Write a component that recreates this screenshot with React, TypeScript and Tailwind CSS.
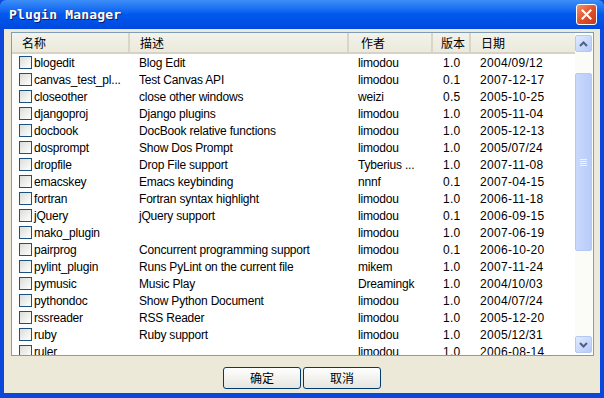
import React from 'react';

type Plugin = {
  name: string;
  desc: string;
  author: string;
  version: string;
  date: string;
};

const plugins: Plugin[] = [
  { name: 'blogedit', desc: 'Blog Edit', author: 'limodou', version: '1.0', date: '2004/09/12' },
  { name: 'canvas_test_pl...', desc: 'Test Canvas API', author: 'limodou', version: '0.1', date: '2007-12-17' },
  { name: 'closeother', desc: 'close other windows', author: 'weizi', version: '0.5', date: '2005-10-25' },
  { name: 'djangoproj', desc: 'Django plugins', author: 'limodou', version: '1.0', date: '2005-11-04' },
  { name: 'docbook', desc: 'DocBook relative functions', author: 'limodou', version: '1.0', date: '2005-12-13' },
  { name: 'dosprompt', desc: 'Show Dos Prompt', author: 'limodou', version: '1.0', date: '2005/07/24' },
  { name: 'dropfile', desc: 'Drop File support', author: 'Tyberius ...', version: '1.0', date: '2007-11-08' },
  { name: 'emacskey', desc: 'Emacs keybinding', author: 'nnnf', version: '0.1', date: '2007-04-15' },
  { name: 'fortran', desc: 'Fortran syntax highlight', author: 'limodou', version: '1.0', date: '2006-11-18' },
  { name: 'jQuery', desc: 'jQuery support', author: 'limodou', version: '0.1', date: '2006-09-15' },
  { name: 'mako_plugin', desc: '', author: 'limodou', version: '1.0', date: '2007-06-19' },
  { name: 'pairprog', desc: 'Concurrent programming support', author: 'limodou', version: '0.1', date: '2006-10-20' },
  { name: 'pylint_plugin', desc: 'Runs PyLint on the current file', author: 'mikem', version: '1.0', date: '2007-11-24' },
  { name: 'pymusic', desc: 'Music Play', author: 'Dreamingk', version: '1.0', date: '2004/10/03' },
  { name: 'pythondoc', desc: 'Show Python Document', author: 'limodou', version: '1.0', date: '2004/07/24' },
  { name: 'rssreader', desc: 'RSS Reader', author: 'limodou', version: '1.0', date: '2005-12-20' },
  { name: 'ruby', desc: 'Ruby support', author: 'limodou', version: '1.0', date: '2005/12/31' },
  { name: 'ruler', desc: '', author: 'limodou', version: '1.0', date: '2006-08-14' },
];

const uiFont = "font-['Liberation_Sans','Noto_Sans_CJK_SC',sans-serif]";

const HeaderCell: React.FC<{ label: string; width: string; pad: string }> = ({ label, width, pad }) => (
  <div className={`${width} ${pad} h-full flex items-center border-r-2 border-r-[#D9D6C7] shrink-0`}>
    <span className="font-['Noto_Sans_CJK_SC',sans-serif] text-[12px] leading-none">{label}</span>
  </div>
);

const Checkbox = () => (
  <div className="w-[13px] h-[13px] border border-[#1C5180] bg-gradient-to-br from-[#DCDCD7] to-white shrink-0" />
);

const ScrollArrow: React.FC<{ up?: boolean }> = ({ up }) => (
  <div className="h-[17px] w-[17px] rounded-[2px] border border-[#B4C8F6] bg-gradient-to-br from-[#E1EAFE] to-[#B6CAF8] flex items-center justify-center">
    <svg width="9" height="6" viewBox="0 0 9 6">
      <path d={up ? 'M1 5 L4.5 1.5 L8 5' : 'M1 1 L4.5 4.5 L8 1'} fill="none" stroke="#4D6185" strokeWidth="2" />
    </svg>
  </div>
);

const App: React.FC = () => {
  return (
    <div className={`w-[604px] h-[398px] bg-[#0B47DB] flex flex-col ${uiFont}`}>
      {/* title bar */}
      <div className="h-[29px] shrink-0 bg-gradient-to-b from-[#3D8EF7] via-[#0058EE] to-[#0049DC] flex items-center justify-between pl-[9px] pr-[7px] rounded-t-[6px]">
        <span className="font-['DejaVu_Sans_Mono',monospace] font-bold text-[13px] text-white tracking-[0.2px] [text-shadow:1px_1px_0_#0A1E6A]">
          Plugin Manager
        </span>
        <div className="w-[21px] h-[21px] rounded-[3px] border border-white bg-gradient-to-br from-[#F0916B] via-[#E0512F] to-[#C4381B] flex items-center justify-center">
          <svg width="11" height="11" viewBox="0 0 11 11">
            <path d="M1.5 1.5 L9.5 9.5 M9.5 1.5 L1.5 9.5" stroke="white" strokeWidth="2" strokeLinecap="square" />
          </svg>
        </div>
      </div>

      {/* body */}
      <div className="flex-1 mx-[4px] mb-[5px] bg-[#ECE9D8] flex flex-col pt-[3px] pl-[7px] pr-[6px]">
        <div className="h-[324px] shrink-0 border border-[#7F9DB9] bg-white flex">
          <div className="flex-1 flex flex-col overflow-hidden">
            <div className="h-[21px] shrink-0 flex bg-gradient-to-b from-[#F3F2EC] to-[#EBEADB] border-b-2 border-b-[#D6D3C6]">
              <HeaderCell label="名称" width="w-[118px]" pad="pl-[10px]" />
              <HeaderCell label="描述" width="w-[219px]" pad="pl-[10px]" />
              <HeaderCell label="作者" width="w-[84px]" pad="pl-[12px]" />
              <HeaderCell label="版本" width="w-[38px]" pad="pl-[8px]" />
              <div className="flex-1 pl-[10px] flex items-center">
                <span className="font-['Noto_Sans_CJK_SC',sans-serif] text-[12px] leading-none">日期</span>
              </div>
            </div>
            <div className="flex flex-col text-[12px] text-black tracking-[-0.2px]">
              {plugins.map((p) => (
                <div key={p.name} className="h-[17px] shrink-0 flex items-center whitespace-nowrap">
                  <div className="w-[118px] shrink-0 flex items-center pl-[7px] gap-[2px]">
                    <Checkbox />
                    <span>{p.name}</span>
                  </div>
                  <div className="w-[219px] shrink-0 pl-[9px]">{p.desc}</div>
                  <div className="w-[84px] shrink-0 pl-[9px]">{p.author}</div>
                  <div className="w-[38px] shrink-0 pl-[10px] tracking-[0.3px]">{p.version}</div>
                  <div className="flex-1 pl-[9px] tracking-[0.3px]">{p.date}</div>
                </div>
              ))}
            </div>
          </div>
          {/* scrollbar */}
          <div className="w-[18px] shrink-0 py-[2px] pr-[1px] flex flex-col bg-white">
            <ScrollArrow up />
            <div className="flex-1 flex flex-col bg-[#FBFBF8] pt-[21px] pb-[85px]">
              <div className="flex-1 rounded-[2px] border border-[#B4C8F6] bg-gradient-to-r from-[#C9D8FC] to-[#B8CCF9] flex items-center justify-center">
                <div className="flex flex-col gap-[1px]">
                  <div className="w-[7px] h-[1px] bg-[#EEF4FE]" />
                  <div className="w-[7px] h-[1px] bg-[#EEF4FE]" />
                  <div className="w-[7px] h-[1px] bg-[#EEF4FE]" />
                  <div className="w-[7px] h-[1px] bg-[#EEF4FE]" />
                </div>
              </div>
            </div>
            <ScrollArrow />
          </div>
        </div>

        {/* buttons */}
        <div className="flex-1 flex items-center justify-center gap-[2px] pt-[7px] pr-[1px]">
          <button className="w-[78px] h-[22px] rounded-[3px] border border-[#003C74] bg-gradient-to-b from-white to-[#E6E5DE] font-['Noto_Sans_CJK_SC',sans-serif] text-[12px] text-black">
            确定
          </button>
          <button className="w-[78px] h-[22px] rounded-[3px] border border-[#003C74] bg-gradient-to-b from-white to-[#E6E5DE] font-['Noto_Sans_CJK_SC',sans-serif] text-[12px] text-black">
            取消
          </button>
        </div>
      </div>
    </div>
  );
};

export default App;
